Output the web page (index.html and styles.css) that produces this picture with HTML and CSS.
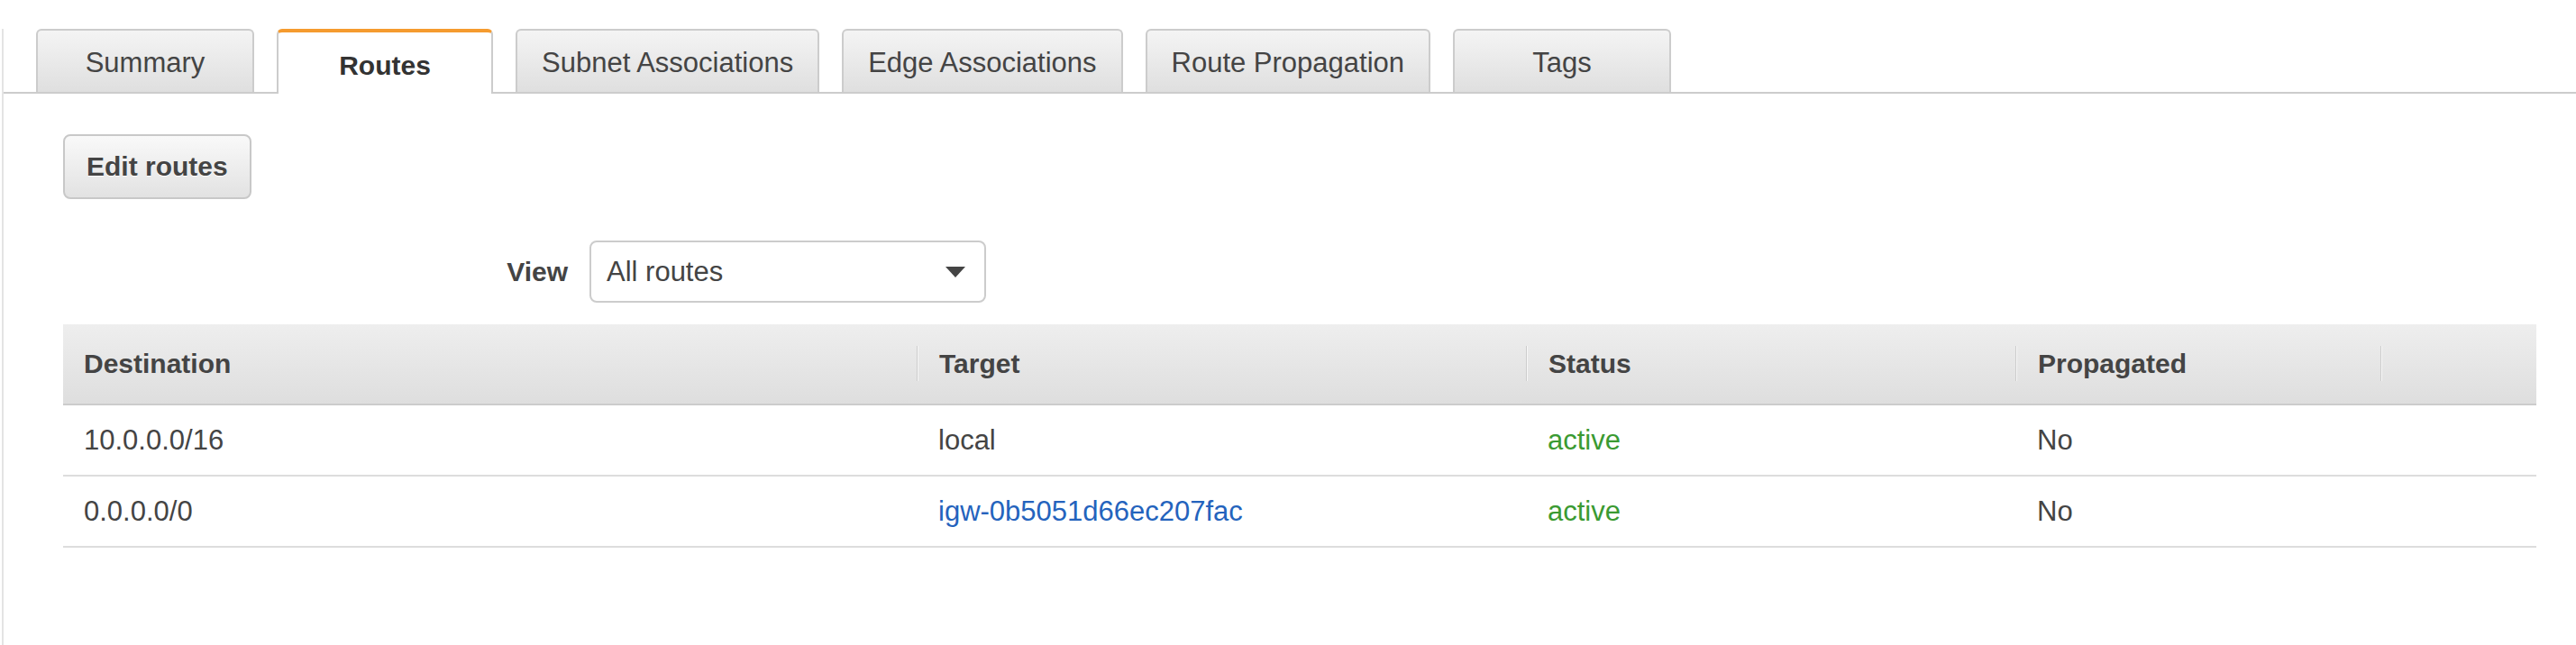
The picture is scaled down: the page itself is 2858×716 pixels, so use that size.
FILE: index.html
```html
<!DOCTYPE html>
<html lang="en">
<head>
<meta charset="utf-8">
<title>Route table - Routes</title>
<link rel="stylesheet" href="styles.css">
</head>
<body>
<div class="page">
  <nav class="tabs">
    <div class="tab">Summary</div>
    <div class="tab tab-active">Routes</div>
    <div class="tab">Subnet Associations</div>
    <div class="tab">Edge Associations</div>
    <div class="tab">Route Propagation</div>
    <div class="tab">Tags</div>
  </nav>
  <main class="content">
    <div class="actions">
      <button class="btn" type="button">Edit routes</button>
    </div>
    <div class="filter">
      <span class="filter-label">View</span>
      <div class="select">
        <span>All routes</span>
        <svg class="caret" width="22" height="12" viewBox="0 0 22 12"><polygon points="0,0 22,0 11,12" fill="#444"/></svg>
      </div>
    </div>
    <table class="routes">
      <colgroup>
        <col class="c1"><col class="c2"><col class="c3"><col class="c4"><col class="c5">
      </colgroup>
      <thead>
        <tr>
          <th>Destination</th>
          <th class="sep">Target</th>
          <th class="sep">Status</th>
          <th class="sep">Propagated</th>
          <th class="sep"></th>
        </tr>
      </thead>
      <tbody>
        <tr>
          <td>10.0.0.0/16</td>
          <td>local</td>
          <td class="status">active</td>
          <td>No</td>
          <td></td>
        </tr>
        <tr>
          <td>0.0.0.0/0</td>
          <td><a class="link" href="#">igw-0b5051d66ec207fac</a></td>
          <td class="status">active</td>
          <td>No</td>
          <td></td>
        </tr>
      </tbody>
    </table>
  </main>
</div>
</body>
</html>
```

FILE: styles.css
```css
html, body {
  margin: 0;
  padding: 0;
  background: #ffffff;
}

body {
  font-family: "Liberation Sans", Arial, Helvetica, sans-serif;
  font-size: 31px;
  color: #444444;
}

.page {
  margin-left: 2px;
  border-left: 2px solid #e4e4e4;
  min-height: 716px;
  box-sizing: border-box;
}

/* Tabs */
.tabs {
  display: flex;
  align-items: flex-end;
  gap: 25px;
  margin-top: 32px;
  padding-left: 36px;
  border-bottom: 2px solid #cccccc;
}

.tab {
  box-sizing: border-box;
  height: 70px;
  min-width: 242px;
  padding: 4px 27px 0;
  display: flex;
  align-items: center;
  justify-content: center;
  border: 2px solid #cccccc;
  border-bottom: none;
  border-radius: 6px 6px 0 0;
  background: linear-gradient(to bottom, #f4f4f4 0%, #dfdfdf 100%);
  color: #444444;
  white-space: nowrap;
}

.tab-active {
  height: 72px;
  margin-bottom: -2px;
  min-width: 240px;
  border-top: 4px solid #f59b2f;
  background: #ffffff;
  font-size: 30px;
  font-weight: bold;
  color: #333333;
  padding-top: 6px;
}

/* Content */
.content {
  padding: 45px 44px 0 66px;
}

.actions {
  display: flex;
}

.btn {
  box-sizing: border-box;
  height: 72px;
  padding: 0 24px;
  font-family: inherit;
  font-size: 30px;
  font-weight: bold;
  color: #444444;
  border: 2px solid #c8c8c8;
  border-radius: 8px;
  background: linear-gradient(to bottom, #f9f9f9 0%, #e2e2e2 100%);
  text-shadow: 0 1px 0 #ffffff;
}

.filter {
  display: flex;
  align-items: center;
  gap: 24px;
  margin-top: 46px;
}

.filter-label {
  width: 560px;
  text-align: right;
  font-size: 30px;
  font-weight: bold;
  color: #444444;
}

.select {
  box-sizing: border-box;
  width: 440px;
  height: 69px;
  display: flex;
  align-items: center;
  justify-content: space-between;
  padding: 0 21px 0 17px;
  border: 2px solid #cccccc;
  border-radius: 8px;
  background: #ffffff;
  color: #444444;
}

.caret {
  display: block;
}

/* Table */
.routes {
  margin-top: 24px;
  width: 2744px;
  border-collapse: collapse;
  table-layout: fixed;
}

.c1 { width: 947px; }
.c2 { width: 676px; }
.c3 { width: 543px; }
.c4 { width: 405px; }
.c5 { width: 173px; }

.routes th {
  position: relative;
  height: 88px;
  padding: 0 0 0 23px;
  text-align: left;
  font-size: 30px;
  font-weight: bold;
  color: #444444;
  background: linear-gradient(to bottom, #eeeeee 0%, #dedede 100%);
  border-bottom: 2px solid #cccccc;
  white-space: nowrap;
}

.routes th.sep {
  padding-left: 25px;
}

.routes th.sep::before {
  content: "";
  position: absolute;
  left: 0;
  top: 24px;
  width: 1px;
  height: 39px;
  background: #cccccc;
  box-shadow: 1px 0 0 #f7f7f7;
}

.routes td {
  height: 77px;
  padding: 0 0 0 23px;
  border-bottom: 2px solid #dddddd;
  color: #444444;
  white-space: nowrap;
}

.routes td + td {
  padding-left: 24px;
}

.routes td.status {
  color: #3a9a32;
}

.routes .link {
  color: #2463bd;
  text-decoration: none;
}
```
